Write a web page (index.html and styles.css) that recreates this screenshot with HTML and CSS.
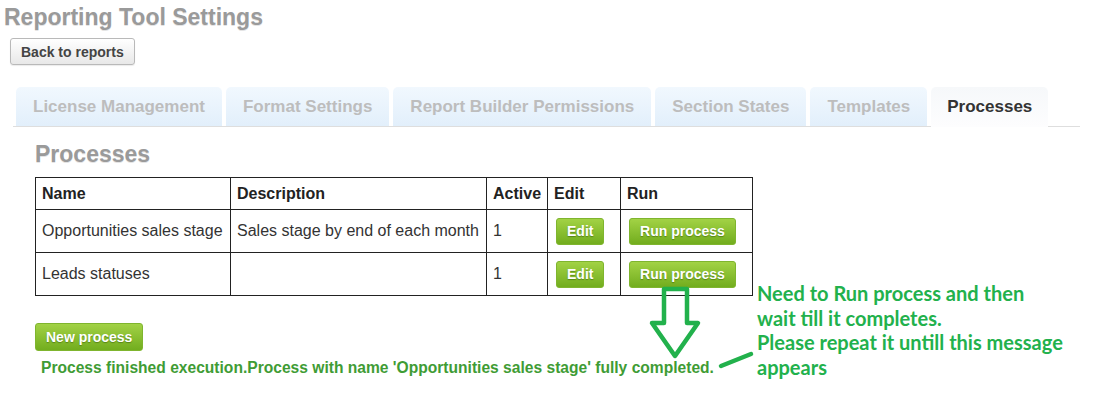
FILE: index.html
```html
<!DOCTYPE html>
<html lang="en">
<head>
	<meta charset="utf-8">
	<title>Reporting Tool Settings</title>
	<link rel="stylesheet" href="styles.css">
</head>
<body>
	<h1 class="title">Reporting Tool Settings</h1>
	<button class="btn-back">Back to reports</button>

	<div class="tabs">
		<div class="tab">License Management</div>
		<div class="tab">Format Settings</div>
		<div class="tab">Report Builder Permissions</div>
		<div class="tab">Section States</div>
		<div class="tab">Templates</div>
		<div class="tab tab-active">Processes</div>
	</div>

	<div class="panel">
		<h2 class="panel-title">Processes</h2>
		<table class="proc">
			<tr>
				<th class="c-name">Name</th>
				<th class="c-desc">Description</th>
				<th class="c-act">Active</th>
				<th class="c-edit">Edit</th>
				<th class="c-run">Run</th>
			</tr>
			<tr>
				<td>Opportunities sales stage</td>
				<td>Sales stage by end of each month</td>
				<td>1</td>
				<td><button class="btn-green">Edit</button></td>
				<td><button class="btn-green">Run process</button></td>
			</tr>
			<tr>
				<td>Leads statuses</td>
				<td></td>
				<td>1</td>
				<td><button class="btn-green">Edit</button></td>
				<td><button class="btn-green">Run process</button></td>
			</tr>
		</table>
		<button class="btn-green btn-new">New process</button>
		<div class="msg">Process finished execution.Process with name 'Opportunities sales stage' fully completed.</div>
	</div>

	<!-- annotation drawn over the screenshot -->
	<svg class="marks" width="1093" height="397" viewBox="0 0 1093 397">
		<path d="M664 289 L664 323 L652 323 L675 356 L698 323 L687 323 L687 289 Z" fill="none" stroke="#22b14c" stroke-width="4.5" stroke-linejoin="round"/>
		<path d="M721 366 L751 354" stroke="#22b14c" stroke-width="4.5" stroke-linecap="round"/>
	</svg>
	<div class="note">
		Need to Run process and then<br>
		wait till it completes.<br>
		Please repeat it untill this message<br>
		appears
	</div>
</body>
</html>
```

FILE: styles.css
```css
body {
	margin: 0;
	font-family: "Liberation Sans", Arial, sans-serif;
	color: #222;
	background: #fff;
}
.title {
	margin: 4px 0 0 4px;
	font-size: 23px;
	line-height: 26px;
	font-weight: bold;
	color: #9a9a9a;
	text-shadow: 0 1px 0 #e4e4e4;
}
.btn-back {
	display: block;
	margin: 8px 0 0 10px;
	height: 27px;
	padding: 0 10px;
	font-family: "Liberation Sans", Arial, sans-serif;
	font-size: 14px;
	font-weight: bold;
	color: #444;
	background: linear-gradient(#ffffff, #e8e8e8);
	border: 1px solid #b9b9b9;
	border-radius: 3px;
	box-shadow: 0 1px 1px rgba(0,0,0,0.08);
}
.tabs {
	display: flex;
	gap: 4px;
	margin: 22px 13px 0 13px;
	padding-left: 3px;
	border-bottom: 1px solid #dedede;
}
.tab {
	height: 39px;
	line-height: 39px;
	padding: 0 17px;
	font-size: 17px;
	font-weight: bold;
	color: #bdbdbd;
	white-space: nowrap;
	background: linear-gradient(#f1f8fe, #e2effb);
	border-radius: 5px 5px 0 0;
}
.tab-active {
	padding: 0 16px;
	color: #333;
	background: linear-gradient(#f6f8fa, #fdfdfe);
	margin-bottom: -1px;
	height: 40px;
}
.panel {
	padding-left: 35px;
}
.panel-title {
	margin: 14px 0 0 0;
	font-size: 23px;
	line-height: 26px;
	font-weight: bold;
	color: #9a9a9a;
	text-shadow: 0 1px 0 #e4e4e4;
}
.proc {
	margin-top: 10px;
	border-collapse: collapse;
	font-size: 16px;
}
.proc th, .proc td {
	border: 1px solid #222;
	padding: 0 6px;
	text-align: left;
	white-space: nowrap;
}
.proc th {
	height: 31px;
	font-weight: bold;
	color: #222;
}
.proc td {
	height: 42px;
	color: #333;
}
.c-name { width: 182px; }
.c-desc { width: 243px; }
.c-act { width: 48px; }
.c-edit { width: 60px; }
.c-run { width: 119px; }
.btn-green {
	height: 27px;
	padding: 0 10px;
	font-family: "Liberation Sans", Arial, sans-serif;
	font-size: 14px;
	font-weight: bold;
	color: #fff;
	text-shadow: 0 1px 1px rgba(60,100,10,0.6);
	background: linear-gradient(#a2d245, #72ad1e);
	border: 1px solid #7fb52e;
	border-radius: 3px;
	margin-left: 2px;
}
.btn-new {
	display: block;
	height: 28px;
	margin: 27px 0 0 0;
}
.msg {
	margin: 7px 0 0 6px;
	font-size: 15.6px;
	line-height: 19px;
	font-weight: bold;
	color: #3f9c35;
}
.marks {
	position: absolute;
	left: 0;
	top: 0;
	pointer-events: none;
}
.note {
	position: absolute;
	left: 757px;
	top: 281px;
	font-family: Lato, "Open Sans", sans-serif;
	font-size: 20px;
	line-height: 24.5px;
	font-weight: bold;
	color: #22b14c;
	white-space: nowrap;
}
```
